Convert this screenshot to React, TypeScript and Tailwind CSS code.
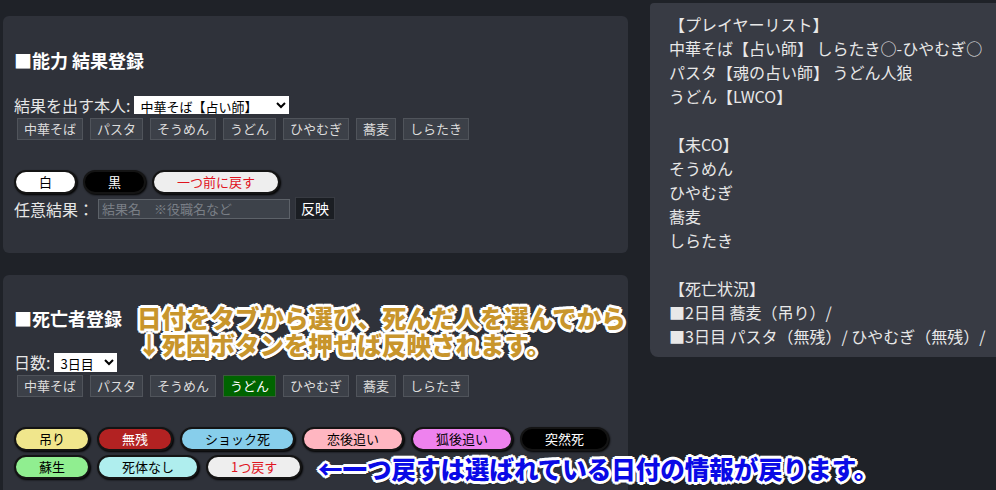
import { ReactNode } from 'react';

const players = ['中華そば', 'パスタ', 'そうめん', 'うどん', 'ひやむぎ', '蕎麦', 'しらたき'];

const outline =
  '[text-shadow:2px_0_0_#fff,-2px_0_0_#fff,0_2px_0_#fff,0_-2px_0_#fff,2px_2px_0_#fff,-2px_-2px_0_#fff,2px_-2px_0_#fff,-2px_2px_0_#fff,3px_0_0_#fff,-3px_0_0_#fff,0_3px_0_#fff,0_-3px_0_#fff,1px_3px_2px_rgba(0,0,0,0.5)]';

function PlayerButtons({ selected }: { selected?: string }) {
  return (
    <div className="flex gap-[7px] pl-[3px]">
      {players.map((p) => (
        <button
          key={p}
          className={
            p === selected
              ? 'h-[22px] px-[6px] border border-[#3d5a3d] bg-[#006400] text-[13px] leading-[18px] text-white'
              : 'h-[22px] px-[6px] border border-[#50545b] bg-[#3c4048] text-[13px] leading-[18px] text-[#dcdcdc]'
          }
        >
          {p}
        </button>
      ))}
    </div>
  );
}

function Pill({ children, className }: { children: ReactNode; className: string }) {
  return (
    <button
      className={`h-[24px] px-[23px] rounded-full border-2 border-[#141414] shadow-[1px_1px_2px_#000] text-[13px] leading-[18px] ${className}`}
    >
      {children}
    </button>
  );
}

function Title({ children }: { children: ReactNode }) {
  return <h3 className="text-[18px] leading-[26px] font-bold text-white">{children}</h3>;
}

export default function App() {
  return (
    <div
      className="w-[996px] h-[490px] overflow-hidden bg-[#1f2228] flex items-start"
      style={{ fontFamily: "'Noto Sans CJK JP', 'Noto Sans', sans-serif" }}
    >
      {/* Left column */}
      <div className="w-[625px] ml-[3px] flex flex-col gap-[22px] pt-[16px] shrink-0">
        {/* 能力 結果登録 */}
        <div className="h-[237px] shrink-0 rounded-[6px] bg-[#2f323a] pl-[11px] pt-[31px]">
          <Title>■能力 結果登録</Title>
          <div className="mt-[22px] flex items-center h-[20px] gap-[4px]">
            <span className="text-[16px] leading-[20px] text-[#e6e6e6]">結果を出す本人:</span>
            <select className="h-[18px] w-[155px] bg-white text-black text-[13px] leading-[16px] px-[2px]">
              <option>中華そば【占い師】</option>
            </select>
          </div>
          <div className="mt-[3px]">
            <PlayerButtons />
          </div>
          <div className="mt-[30px] flex gap-[6px]">
            <Pill className="bg-white text-black">白</Pill>
            <Pill className="bg-black text-white">黒</Pill>
            <Pill className="bg-[#eeeeee] text-[#e0141e]">一つ前に戻す</Pill>
          </div>
          <div className="mt-[3px] flex items-center h-[23px]">
            <span className="text-[16px] leading-[20px] text-[#e6e6e6] w-[84px]">任意結果：</span>
            <input
              placeholder="結果名　※役職名など"
              className="h-[20px] w-[192px] bg-[#3d424a] border border-[#5d6269] px-[3px] text-[13px] text-white placeholder:text-[#7a7f86] outline-none"
            />
            <button className="ml-[5px] h-[23px] px-[5px] bg-[#1b1e23] border border-[#383b42] text-[14px] text-white">
              反映
            </button>
          </div>
        </div>

        {/* 死亡者登録 */}
        <div className="relative h-[260px] shrink-0 rounded-[6px] bg-[#2f323a] pl-[11px] pt-[30px]">
          <Title>■死亡者登録</Title>
          <div className="mt-[21px] flex items-center h-[20px] gap-[4px]">
            <span className="text-[16px] leading-[20px] text-[#e6e6e6]">日数:</span>
            <select className="h-[19px] w-[63px] bg-white text-black text-[13px] leading-[16px] px-[2px]">
              <option>3日目</option>
            </select>
          </div>
          <div className="mt-[3px]">
            <PlayerButtons selected="うどん" />
          </div>
          <div className="mt-[30px] flex flex-col gap-[4px]">
            <div className="flex gap-[7px]">
              <Pill className="w-[76px] px-0 bg-[#f0e68c] text-black">吊り</Pill>
              <Pill className="w-[76px] px-0 bg-[#b22222] text-white">無残</Pill>
              <Pill className="bg-[#87ceeb] text-black">ショック死</Pill>
              <Pill className="bg-[#ffb6c1] text-black">恋後追い</Pill>
              <Pill className="bg-[#ee82ee] text-black">狐後追い</Pill>
              <Pill className="bg-black text-white">突然死</Pill>
            </div>
            <div className="flex gap-[7px]">
              <Pill className="w-[76px] px-0 bg-[#90ee90] text-black">蘇生</Pill>
              <Pill className="bg-[#afeeee] text-black">死体なし</Pill>
              <Pill className="bg-[#eeeeee] text-[#e0141e]">1つ戻す</Pill>
            </div>
          </div>

          {/* annotations laid over the form */}
          <div
            className={`absolute left-[134px] top-[29px] text-[24.5px] leading-[27px] font-black text-[#c8952c] whitespace-nowrap ${outline}`}
          >
            日付をタブから選び、死んだ人を選んでから
            <br />
            ↓死因ボタンを押せば反映されます。
          </div>
          <div
            className={`absolute left-[315px] top-[180px] text-[24.5px] leading-[27px] font-black text-[#0a0ae6] whitespace-nowrap ${outline}`}
          >
            ←一つ戻すは選ばれている日付の情報が戻ります。
          </div>
        </div>
      </div>

      {/* Right panel */}
      <div className="ml-[22px] mt-[3px] h-[354px] flex-1 rounded-bl-[8px] rounded-tl-[4px] bg-[#383b44] pl-[19px] pt-[9px] text-[16px] leading-[24px] text-[#e8e8e8] whitespace-nowrap overflow-hidden">
        <div>【プレイヤーリスト】</div>
        <div>中華そば【占い師】 しらたき○-ひやむぎ○</div>
        <div>パスタ【魂の占い師】 うどん人狼</div>
        <div>うどん【LWCO】</div>
        <div className="h-[24px]" />
        <div>【未CO】</div>
        <div>そうめん</div>
        <div>ひやむぎ</div>
        <div>蕎麦</div>
        <div>しらたき</div>
        <div className="h-[24px]" />
        <div>【死亡状況】</div>
        <div>■2日目 蕎麦（吊り）/</div>
        <div>■3日目 パスタ（無残）/ ひやむぎ（無残）/</div>
      </div>
    </div>
  );
}
